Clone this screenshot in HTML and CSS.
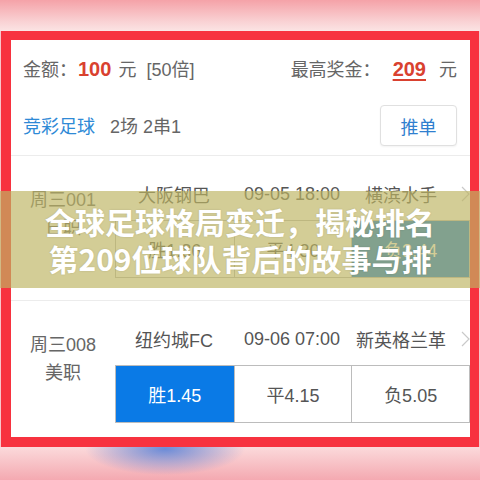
FILE: index.html
```html
<!DOCTYPE html>
<html lang="zh-CN">
<head>
    <meta charset="UTF-8">
    <meta name="viewport" content="width=device-width, initial-scale=1.0">
    <title>竞彩足球 推单</title>
    <link rel="stylesheet" href="styles.css">
</head>
<body>
    <div class="top-fade"></div>

    <div class="frame">
        <div class="sheet">
            <div class="summary">
                <div class="summary-row">
                    <div class="amount">
                        <span class="label">金额：</span><span class="money">100</span><span class="unit">元</span><span class="times">[50倍]</span>
                    </div>
                    <div class="prize">
                        <span class="label">最高奖金：</span><span class="money linked">209</span><span class="unit">元</span>
                    </div>
                </div>
                <div class="summary-row play">
                    <div>
                        <span class="game">竞彩足球</span><span class="pass">2场 2串1</span>
                    </div>
                    <button class="push-btn">推单</button>
                </div>
            </div>

            <div class="match">
                <div class="match-tag">
                    <div>周三001</div>
                    <div>日职</div>
                </div>
                <div class="match-body">
                    <div class="teams">
                        <span>大阪钢巴</span>
                        <span>09-05 18:00</span>
                        <span>横滨水手</span>
                        <svg class="chev" width="9" height="16" viewBox="0 0 9 16"><polyline points="1,1 8,8 1,15" fill="none" stroke="#c9c9c9" stroke-width="1.2"/></svg>
                    </div>
                    <div class="odds">
                        <div class="odd">胜1.86</div>
                        <div class="odd">平4.30</div>
                        <div class="odd picked">负3.44</div>
                    </div>
                </div>
            </div>

            <div class="match">
                <div class="match-tag">
                    <div>周三008</div>
                    <div>美职</div>
                </div>
                <div class="match-body">
                    <div class="teams">
                        <span>纽约城FC</span>
                        <span>09-06 07:00</span>
                        <span>新英格兰革</span>
                        <svg class="chev" width="9" height="16" viewBox="0 0 9 16"><polyline points="1,1 8,8 1,15" fill="none" stroke="#c9c9c9" stroke-width="1.2"/></svg>
                    </div>
                    <div class="odds">
                        <div class="odd picked">胜1.45</div>
                        <div class="odd">平4.15</div>
                        <div class="odd">负5.05</div>
                    </div>
                </div>
            </div>
        </div>
    </div>

    <div class="bottom-fade"></div>

    <div class="banner">
        <div>全球足球格局变迁，揭秘排名</div>
        <div>第209位球队背后的故事与排</div>
    </div>
</body>
</html>
```

FILE: styles.css
```css
body {
    margin: 0;
    width: 480px;
    height: 480px;
    overflow: hidden;
    position: relative;
    background: #f8c6ca;
    font-family: "Liberation Sans", "Noto Sans CJK SC", sans-serif;
    color: #666;
}

.top-fade {
    height: 31px;
    background: linear-gradient(#f5a2a8, #f9d2d4 70%, #fbe4e4);
}

.frame {
    margin-left: 1px;
    width: 459px;
    border: 10px solid #f7323f;
    border-top-width: 9px;
    border-right-width: 9px;
}

.sheet {
    height: 397px;
    overflow: hidden;
    background: #fff;
}

/* summary block */
.summary {
    padding: 0 13px 0 12px;
    border-bottom: 1px solid #ececec;
}
.summary-row {
    display: flex;
    justify-content: space-between;
    align-items: center;
    height: 56px;
    font-size: 18px;
}
.summary-row.play {
    height: 58px;
    padding-bottom: 1px;
}
.label {
    color: #666;
}
.money {
    color: #d9412f;
    font-weight: bold;
    font-size: 20px;
    margin: 0 7px 0 1px;
}
.prize .money {
    margin: 0 13px 0 12px;
}
.linked {
    text-decoration: underline;
    text-underline-offset: 3px;
}
.unit {
    color: #666;
}
.times {
    margin-left: 10px;
    color: #666;
}
.game {
    color: #2f8ad6;
}
.pass {
    margin-left: 15px;
    color: #666;
}
.push-btn {
    width: 77px;
    height: 41px;
    margin-top: 1px;
    background: #fff;
    border: 1px solid #e0e0e0;
    border-radius: 4px;
    color: #2f7fcf;
    font-family: "Liberation Sans", "Noto Sans CJK SC", sans-serif;
    font-size: 18px;
    box-shadow: 0 1px 2px rgba(0, 0, 0, 0.05);
}

/* match rows */
.match {
    display: flex;
    height: 144px;
    border-bottom: 1px solid #ececec;
    font-size: 18px;
}
.match-tag {
    width: 105px;
    padding-top: 30px;
    line-height: 28px;
    text-align: center;
    color: #666;
}
.match-body {
    width: 355px;
}
.teams {
    display: grid;
    grid-template-columns: 118px 118px 100px 1fr;
    align-items: center;
    height: 64px;
    padding-top: 12px;
    box-sizing: border-box;
    color: #555;
    text-align: center;
}
.chev {
    margin-left: 10px;
}
.odds {
    display: grid;
    grid-template-columns: repeat(3, 1fr);
    height: 58px;
    border: 1px solid #bcbcbc;
    box-sizing: border-box;
}
.odd {
    display: flex;
    align-items: center;
    justify-content: center;
    color: #555;
    border-left: 1px solid #bcbcbc;
}
.odd:first-child {
    border-left: none;
}
.odd.picked {
    background: #0a7ae6;
    color: #fff;
}

.bottom-fade {
    height: 33px;
    background:
        radial-gradient(ellipse 80px 26px at 165px 2px, rgba(100, 135, 215, 0.95), rgba(100, 135, 215, 0) 100%),
        linear-gradient(#fbdadb, #f4a9b1);
}

/* title overlay */
.banner {
    position: absolute;
    top: 191px;
    left: 0;
    width: 480px;
    height: 97px;
    padding-top: 12px;
    box-sizing: border-box;
    background: rgba(190, 181, 99, 0.67);
    color: #fff;
    font-family: "Noto Sans CJK SC", sans-serif;
    font-weight: bold;
    font-size: 30px;
    line-height: 37px;
    text-align: center;
    white-space: nowrap;
    text-shadow: 0 0 2px rgba(0, 0, 0, 0.15);
}
```
